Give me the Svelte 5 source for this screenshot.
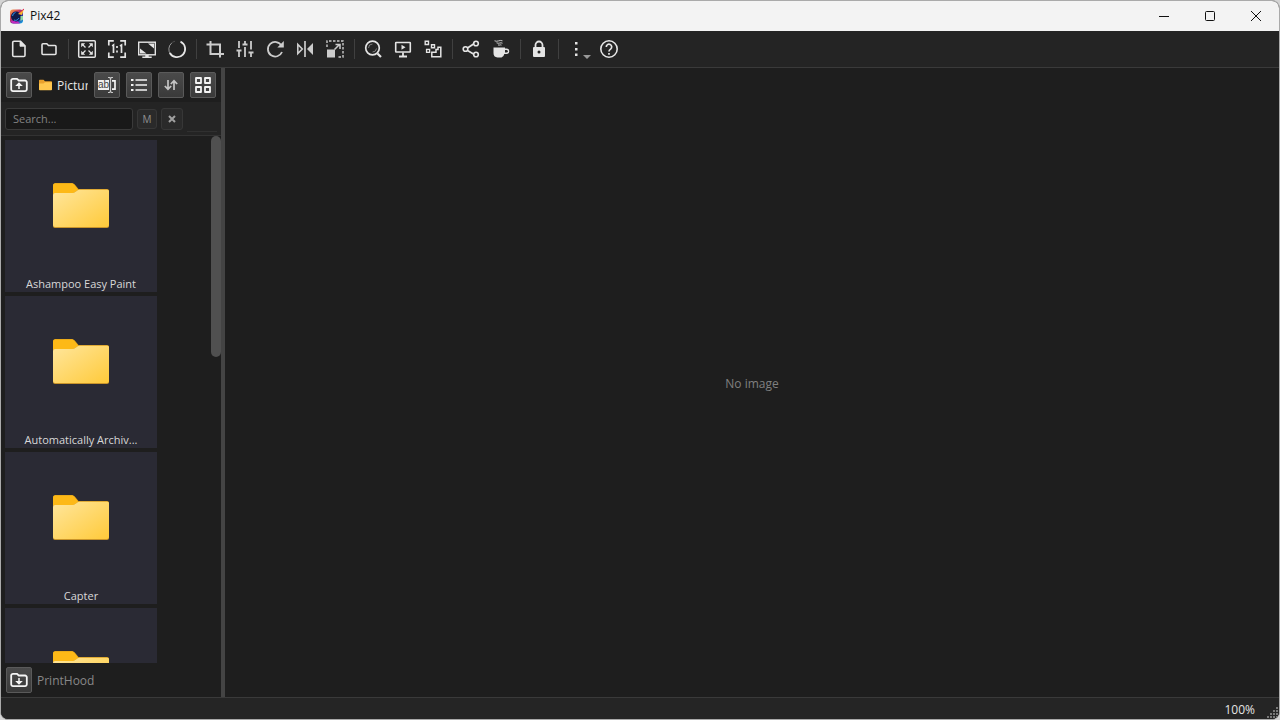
<script lang="ts">
	type Tool = { id: string; label: string };

	const groups: Tool[][] = [
		[
			{ id: 'file', label: 'New' },
			{ id: 'open', label: 'Open' }
		],
		[
			{ id: 'fit', label: 'Fit to window' },
			{ id: 'actual', label: 'Actual size' },
			{ id: 'fullscreen', label: 'Full screen' },
			{ id: 'circle', label: 'Loading' }
		],
		[
			{ id: 'crop', label: 'Crop' },
			{ id: 'adjust', label: 'Adjust' },
			{ id: 'rotate', label: 'Rotate' },
			{ id: 'flip', label: 'Flip' },
			{ id: 'resize', label: 'Resize' }
		],
		[
			{ id: 'search', label: 'Zoom' },
			{ id: 'slideshow', label: 'Slideshow' },
			{ id: 'batch', label: 'Batch' }
		],
		[
			{ id: 'share', label: 'Share' },
			{ id: 'coffee', label: 'Buy a coffee' }
		],
		[{ id: 'lock', label: 'Lock' }],
		[
			{ id: 'more', label: 'More' },
			{ id: 'help', label: 'Help' }
		]
	];

	const viewTools: Tool[] = [
		{ id: 'rename', label: 'Rename' },
		{ id: 'list', label: 'List' },
		{ id: 'sort', label: 'Sort' },
		{ id: 'grid', label: 'Thumbnails' }
	];

	const folders = ['Ashampoo Easy Paint', 'Automatically Archiv...', 'Capter', 'Documents'];

	let query = $state('');
</script>

{#snippet icon(id: string)}
	<svg class="icon" viewBox="0 0 20 20" fill="none" stroke="currentColor" stroke-width="1.6" aria-hidden="true">
		{#if id === 'file'}
			<path d="M5 2.2h6.5L16 6.8v9.4a1.3 1.3 0 0 1-1.3 1.3H5a1.3 1.3 0 0 1-1.3-1.3V3.5A1.3 1.3 0 0 1 5 2.2z" />
			<path d="M11 2v5.3h5z" fill="currentColor" stroke-width="0.8" />
		{:else if id === 'open'}
			<path d="M4 4.8h3.8l1.7 1.7H16a1 1 0 0 1 1 1v7a1 1 0 0 1-1 1H4a1 1 0 0 1-1-1V5.8a1 1 0 0 1 1-1z" />
		{:else if id === 'fit'}
			<rect x="1.7" y="1.7" width="16.6" height="16.6" rx="1" stroke-width="1.5" />
			<path d="M8.5 8.5 5 5M11.5 8.5 15 5M8.5 11.5 5 15M11.5 11.5 15 15" stroke-width="1.3" />
			<path d="M4.2 4.2h4L4.2 8.2zM15.8 4.2h-4l4 4zM4.2 15.8h4l-4-4zM15.8 15.8h-4l4-4z" fill="currentColor" stroke="none" />
		{:else if id === 'actual'}
			<path d="M1.8 6.5v-4.7h5M13.2 1.8h5v4.7M18.2 13.5v4.7h-5M6.8 18.2h-5v-4.7" stroke-width="1.7" />
			<path d="M5.2 7 6.5 6v8M13 7l1.5-1v8M10 7v2M10 11.5v2" stroke-width="1.7" />
		{:else if id === 'fullscreen'}
			<rect x="1.7" y="3.2" width="16.6" height="12.6" stroke-width="1.4" />
			<path d="M11 4.5h6v5zM3 9.500l6.500 5H3zM8.3 16h3.400v1.500h3V19h-9.400v-1.500h3z" fill="currentColor" stroke="none" />
		{:else if id === 'circle'}
			<path d="M4 4.5A8 8 0 0 1 8 2.2" stroke-width="0.7" opacity="0.3" />
			<path d="M4.5 4.2A8.2 8.2 0 0 0 3.5 15.2" stroke-width="1" opacity="0.6" />
			<path d="M2.8 14A8.2 8.2 0 1 0 13.5 2.6" stroke-width="1.8" />
		{:else if id === 'crop'}
			<path d="M5.5 2v13h13.5M1.5 5.5h13.5V18.5" stroke-width="2" />
		{:else if id === 'adjust'}
			<path d="M4 2v7M4 12v6M10 2v3M10 8v10M16 2v8.5M16 14v4M1.5 11.5h5M7.5 5.5h5M13.500 13.500h5" stroke-width="1.8" />
		{:else if id === 'rotate'}
			<path d="M17 13a7.300 7.300 0 1 1-.5-6.500" stroke-width="1.800" />
			<path d="M18.800 2v6.500h-6.500z" fill="currentColor" stroke="none" />
		{:else if id === 'flip'}
			<path d="M10 2v16" stroke-width="1.7" />
			<path d="M2.8 5.5v9L7.3 10z" stroke-width="1.6" />
			<path d="M18 4v12l-6-6z" fill="currentColor" stroke="none" />
		{:else if id === 'resize'}
			<path d="M2 8V2h16v16h-6" stroke-width="1.4" stroke-dasharray="2.5 1.5" />
			<rect x="2" y="10.5" width="8" height="8" fill="currentColor" stroke="none" />
			<path d="m9.5 10.5 4.5-4.5M10.5 5.5h4.5v4.5" stroke-width="1.5" />
		{:else if id === 'search'}
			<circle cx="9.5" cy="9" r="6.8" stroke-width="1.7" />
			<path d="m14.5 14.5 3.500 3.500" stroke-width="2.200" />
			<path d="M5.500 9A4 4 0 0 1 9.500 5M13.500 9.500a4 4 0 0 1-4 3.500" stroke-width="0.800" opacity="0.600" />
		{:else if id === 'slideshow'}
			<rect x="2.7" y="3.5" width="14.6" height="9.500" rx="0.5" />
			<path d="M10 13.500v4M6 17.500h8" stroke-width="1.800" />
			<path d="M8.500 5.700v5L12.500 8.200z" fill="currentColor" stroke="none" />
		{:else if id === 'batch'}
			<path d="M2.2 2.200h3.300v3.300H2.200zM8.500 5.700h3v3h-3zM3.600 10.400h3v3h-3z" stroke-width="1.400" />
			<path d="M8.800 17.800v-4.600H13v-2.700h2V8.200h2.800v9.600z" stroke-width="1.500" />
		{:else if id === 'share'}
			<path d="M6.500 9 12.500 5M6.500 11.500l6 3.500" />
			<circle cx="4.500" cy="10" r="2.300" />
			<circle cx="15" cy="4.500" r="2.300" />
			<circle cx="15" cy="15.500" r="2.300" />
		{:else if id === 'coffee'}
			<path d="M2.500 8.500h11.500v1h1.500a2.700 2.700 0 0 1 0 5.500h-2.200A4.500 4.500 0 0 1 10.500 18.500H6.500A4.400 4.400 0 0 1 2.500 14z" fill="currentColor" stroke="none" />
			<path d="M14 11h1.500a1.200 1.200 0 0 1 0 2.500H14z" fill="#242424" stroke="none" />
			<path d="M3.500 1.800c3 1.500 5-1.300 8 0M5.500 3.800c2.500 1.300 4-.8 6 .4M7 5.900c1.500.7 2.500-.5 3.500.200" stroke-width="1" opacity="0.850" />
		{:else if id === 'lock'}
			<path d="M6.5 9V6a3.500 3.500 0 0 1 7 0V9" stroke-width="1.800" />
			<path d="M5 8h10a1 1 0 0 1 1 1v8a1 1 0 0 1-1 1H5a1 1 0 0 1-1-1V9a1 1 0 0 1 1-1z" fill="currentColor" stroke="none" />
			<circle cx="10" cy="13" r="1.5" fill="#242424" stroke="none" />
		{:else if id === 'more'}
			<path d="M9 3h2.5v2.5H9zM9 9h2.5v2.5H9zM9 14.5h2.5V17H9z" fill="currentColor" stroke="none" />
		{:else if id === 'help'}
			<circle cx="10" cy="10" r="8.2" />
			<path d="M7.3 8a2.7 2.7 0 1 1 4.3 2.1c-1 .7-1.600 1.100-1.600 2.300M10 14v1.700" stroke-width="1.700" />
		{:else if id === 'up' || id === 'down'}
			<path d="M4 3.8h4L9.800 5.500H16a1.800 1.800 0 0 1 1.800 1.800v7a1.800 1.800 0 0 1-1.800 1.800H4a1.800 1.800 0 0 1-1.800-1.800V5.600A1.800 1.800 0 0 1 4 3.800z" stroke-width="1.800" />
			{#if id === 'up'}
				<path d="M10 14v-5M8 10.300 10 8.300l2 2z" stroke-width="1.500" />
			{:else}
				<path d="M10 8v5M8 11.700l2 2 2-2z" stroke-width="1.500" />
			{/if}
		{:else if id === 'rename'}
			<path d="M1 5h11v10H1z" fill="#f0f0f0" stroke="none" />
			<text x="1" y="13" fill="#444" stroke="none">ab</text>
			<path d="M11 2.500h1.500l1 1 1-1H16M11 17.500h1.500l1-1 1 1H16M13.500 3.500v13" stroke="#c8c8c8" stroke-width="1.200" />
			<path d="M15 5.800h3v8.400h-3" stroke-width="1.700" />
		{:else if id === 'list'}
			<path d="M2 5h2.500M2 10h2.500M2 15h2.500" stroke-width="2.200" />
			<path d="M6.500 5H18M6.500 10H18M6.500 15H18" stroke-width="1.700" />
		{:else if id === 'sort'}
			<path d="M7 5v9M3.800 11 7 14.200 10.200 11M13 15V6M9.800 9 13 5.800 16.200 9" stroke-width="1.700" />
		{:else if id === 'grid'}
			<path d="M3 3h5v5H3zM12 3h5v5h-5zM3 12h5v5H3zM12 12h5v5h-5z" stroke-width="1.800" stroke-linejoin="round" />
		{/if}
	</svg>
{/snippet}

<div class="desktop">
	<div class="window">
		<header class="titlebar">
			<svg class="logo" viewBox="0 0 16 16" aria-hidden="true">
				<defs>
					<linearGradient id="logo-fill" x1="0" y1="0" x2="1" y2="1">
						<stop offset="0" stop-color="#ffb04a" />
						<stop offset="0.35" stop-color="#d0405a" />
						<stop offset="0.65" stop-color="#38269c" />
						<stop offset="1" stop-color="#13bcee" />
					</linearGradient>
				</defs>
				<rect x="1" y="1.5" width="13" height="14" rx="3" fill="url(#logo-fill)" />
				<path d="M2 12.500a3 3 0 0 0 3 3h6l-2-2z" fill="#c42bc0" />
				<circle cx="7" cy="8.500" r="5" fill="#101a4a" />
				<path d="M3.500 8a4 4 0 0 1 3-3.500M5 12c2 1 4 0 5-2" stroke="#2f8fe8" fill="none" />
				<path d="m9 6 6-5-2 6z" fill="#f9b52c" />
				<path d="M11.500 8h2.500v3.500L11.500 13z" fill="#8fd8a0" />
				<path d="m10 5 5-4" stroke="#e1224e" />
			</svg>
			<h1>Pix42</h1>
			<div class="window-controls">
				<button aria-label="Minimize">
					<svg viewBox="0 0 12 12"><path d="M1 6.500h10" /></svg>
				</button>
				<button aria-label="Maximize">
					<svg viewBox="0 0 12 12"><rect x="1.5" y="1.5" width="9" height="9" rx="1" /></svg>
				</button>
				<button aria-label="Close">
					<svg viewBox="0 0 12 12"><path d="m1 1 10 10M11 1 1 11" /></svg>
				</button>
			</div>
		</header>

		<div class="toolbar" role="toolbar" aria-label="Main tools">
			{#each groups as group, i}
				{#if i > 0}<span class="separator"></span>{/if}
				{#each group as tool}
					<button class="tool {tool.id}" aria-label={tool.label}>
						{@render icon(tool.id)}
						{#if tool.id === 'more'}<span class="caret"></span>{/if}
					</button>
				{/each}
			{/each}
		</div>

		<div class="content">
			<aside class="sidebar">
				<div class="nav-row">
					<button class="nav-btn" aria-label="Parent folder">{@render icon('up')}</button>
					<a class="path" href="#pictures">
						<svg viewBox="0 0 13 12" aria-hidden="true">
							<path d="M0 1.500A.8.800 0 0 1 .8.700h3.700L6 2.200h6.200a.8.800 0 0 1 .8.800V10H0z" fill="#e9a02c" />
							<path d="M0 4.500h4.500L6 3.200h7v7.200a.8.800 0 0 1-.8.800H.8a.8.800 0 0 1-.8-.8z" fill="#ffc74f" />
						</svg>
						<span>Pictures</span>
					</a>
					{#each viewTools as tool}
						<button class="nav-btn {tool.id}" aria-label={tool.label}>{@render icon(tool.id)}</button>
					{/each}
				</div>

				<div class="search-row">
					<input type="text" placeholder="Search..." aria-label="Search" bind:value={query} />
					<button class="match">M</button>
					<button class="clear" aria-label="Clear search" onclick={() => (query = '')}>
						<svg viewBox="0 0 8 8"><path d="m1 1 6 6M7 1 1 7" /></svg>
					</button>
					<span class="search-line"></span>
				</div>

				<div class="browser">
					<ul class="folders">
						{#each folders as name}
							<li class="tile">
								<svg class="folder" viewBox="0 0 56 45" aria-hidden="true">
									<defs>
										<linearGradient id="folder-front" x1="0" y1="0" x2="1" y2="1">
											<stop offset="0" stop-color="#ffe69c" />
											<stop offset="1" stop-color="#ffca3a" />
										</linearGradient>
									</defs>
									<path d="M0 2.500A2.500 2.500 0 0 1 2.500 0H18c2 0 3 .6 4 1.800L25.500 6H54a2 2 0 0 1 2 2v30H0z" fill="#d99d1c" />
									<path d="M0 2.800A2.300 2.300 0 0 1 2.300.500H18c2 0 2.700.5 3.700 1.700L25 6.500 22 11H0z" fill="#fdb917" />
									<path d="M0 12a2 2 0 0 1 2-2h16.500c2 0 3-.4 4.500-1.500l1-.8c1-.8 1.500-1 3-1H54A2 2 0 0 1 56 9v34a2 2 0 0 1-2 2H2a2 2 0 0 1-2-2z" fill="#c9942a" />
									<path d="M0 12a2 2 0 0 1 2-2h16.500c2 0 3-.4 4.500-1.500l1-.8c1-.8 1.500-1 3-1H54A2 2 0 0 1 56 9v33a2 2 0 0 1-2 2H2a2 2 0 0 1-2-2z" fill="url(#folder-front)" />
								</svg>
								<span class="name">{name}</span>
							</li>
						{/each}
					</ul>
					<div class="scrollbar"><div class="thumb"></div></div>
				</div>

				<div class="next-row">
					<button class="nav-btn" aria-label="Next folder">{@render icon('down')}</button>
					<span>PrintHood</span>
				</div>
			</aside>

			<main class="viewer">No image</main>
		</div>

		<footer class="statusbar">
			<span>100%</span>
			<svg class="grip" viewBox="0 0 12 12" aria-hidden="true">
				<path d="M9 0h2v2H9zM6 3h2v2H6zM9 3h2v2H9zM3 6h2v2H3zM6 6h2v2H6zM9 6h2v2H9zM0 9h2v2H0zM3 9h2v2H3zM6 9h2v2H6zM9 9h2v2H9z" />
			</svg>
		</footer>
	</div>
</div>

<style>
	:global(body) {
		margin: 0;
		background: #d4d4d4;
	}

	.desktop {
		height: 100vh;
		font-family: 'Open Sans', 'Noto Sans', sans-serif;
		font-size: 12px;
		color: #e4e4e4;
	}

	.window {
		box-sizing: border-box;
		height: 100%;
		display: flex;
		flex-direction: column;
		border: 1px solid #aaa;
		border-radius: 8px;
		overflow: hidden;
		background: #1e1e1e;
	}

	button {
		display: flex;
		align-items: center;
		justify-content: center;
		padding: 0;
		border: none;
		background: none;
		color: inherit;
		font: inherit;
		flex-shrink: 0;
	}

	.icon {
		width: 20px;
		height: 20px;
	}

	.titlebar {
		display: flex;
		align-items: center;
		height: 30px;
		flex-shrink: 0;
		padding-left: 8px;
		background: #f3f3f3;
		color: #111;
	}

	.logo {
		width: 16px;
		height: 16px;
	}

	.titlebar h1 {
		margin: 0 0 0 5px;
		padding-bottom: 2px;
		font-size: 12px;
		font-weight: 400;
	}

	.window-controls {
		display: flex;
		margin-left: auto;
	}

	.window-controls button {
		width: 46px;
		height: 30px;
	}

	.window-controls svg {
		width: 12px;
		height: 12px;
		fill: none;
		stroke: #111;
	}

	.toolbar {
		display: flex;
		align-items: center;
		height: 36px;
		flex-shrink: 0;
		padding: 0 3px;
		background: #242424;
		border-bottom: 1px solid #3a3a3a;
	}

	.tool {
		width: 30px;
		height: 30px;
	}

	.tool.more {
		width: 32px;
		padding-right: 4px;
		position: relative;
	}

	.caret {
		position: absolute;
		right: 3px;
		bottom: 5px;
		border: 4px solid transparent;
		border-top-color: #999;
		border-bottom: none;
	}

	.crop,
	.adjust,
	.rotate,
	.flip,
	.resize {
		color: #ccc;
	}

	.separator {
		width: 1px;
		height: 20px;
		margin: 0 3px 0 4px;
		background: #404040;
	}

	.content {
		display: flex;
		flex: 1;
		min-height: 0;
	}

	.sidebar {
		display: flex;
		flex-direction: column;
		width: 220px;
		flex-shrink: 0;
		border-right: 4px solid #444;
	}

	.nav-row {
		display: flex;
		align-items: center;
		gap: 6px;
		height: 34px;
		flex-shrink: 0;
		padding: 0 5px;
	}

	.nav-btn {
		box-sizing: border-box;
		width: 26px;
		height: 26px;
		border: 1px solid #5a5a5a;
		border-radius: 2px;
		background: linear-gradient(#4a4a4a, #3a3a3a);
		color: #f4f4f4;
	}

	.nav-btn text {
		font-family: 'Liberation Sans', sans-serif;
		font-size: 10px;
	}

	.nav-btn.sort {
		color: #c4c4c4;
	}

	.path {
		display: flex;
		align-items: center;
		gap: 5px;
		flex: 1;
		min-width: 0;
		color: #e8e8e8;
		text-decoration: none;
	}

	.path svg {
		width: 13px;
		height: 12px;
		margin-left: 1px;
		flex-shrink: 0;
	}

	.path span {
		overflow: hidden;
		white-space: nowrap;
	}

	.search-row {
		box-sizing: border-box;
		display: flex;
		align-items: center;
		gap: 4px;
		height: 34px;
		flex-shrink: 0;
		padding: 0 4px;
		background: #242424;
		border-bottom: 1px solid #323232;
	}

	.search-row input {
		box-sizing: border-box;
		width: 128px;
		height: 22px;
		padding: 0 7px;
		border: 1px solid #3a3a3a;
		border-radius: 3px;
		background: #191919;
		color: #ddd;
		font-family: inherit;
		font-size: 11px;
	}

	.search-row input::placeholder {
		color: #828282;
	}

	.match,
	.clear {
		box-sizing: border-box;
		border: 1px solid #373737;
		border-radius: 3px;
		background: #2a2a2a;
		color: #909090;
	}

	.match {
		width: 20px;
		height: 20px;
		font-size: 10px;
	}

	.clear {
		width: 22px;
		height: 22px;
	}

	.clear svg {
		width: 8px;
		height: 8px;
		stroke: #a0a0a0;
		stroke-width: 2;
	}

	.search-line {
		flex: 1;
		height: 1px;
		align-self: flex-end;
		margin-bottom: 3px;
		background: #303030;
	}

	.browser {
		display: flex;
		flex: 1;
		min-height: 0;
		overflow: hidden;
	}

	.folders {
		display: flex;
		flex-direction: column;
		gap: 4px;
		flex: 1;
		margin: 0;
		padding: 4px;
		list-style: none;
	}

	.tile {
		box-sizing: border-box;
		display: flex;
		flex-direction: column;
		align-items: center;
		justify-content: space-between;
		width: 152px;
		height: 152px;
		flex-shrink: 0;
		padding-top: 43px;
		background: #2a2a34;
	}

	.folder {
		width: 56px;
		height: 45px;
	}

	.name {
		font-size: 11px;
		line-height: 16px;
		color: #d8d8d8;
	}

	.scrollbar {
		width: 10px;
	}

	.thumb {
		height: 42%;
		border-radius: 5px;
		background: #505050;
	}

	.next-row {
		display: flex;
		align-items: center;
		gap: 5px;
		height: 34px;
		flex-shrink: 0;
		padding: 0 5px;
		color: #888;
	}

	.viewer {
		display: flex;
		align-items: center;
		justify-content: center;
		flex: 1;
		padding-top: 2px;
		color: #808080;
	}

	.statusbar {
		display: flex;
		align-items: center;
		justify-content: flex-end;
		gap: 12px;
		height: 21px;
		flex-shrink: 0;
		border-top: 1px solid #3a3a3a;
		background: #252525;
	}

	.statusbar span {
		padding-top: 2px;
	}

	.grip {
		width: 12px;
		height: 12px;
		align-self: flex-end;
		fill: #777;
	}
</style>
